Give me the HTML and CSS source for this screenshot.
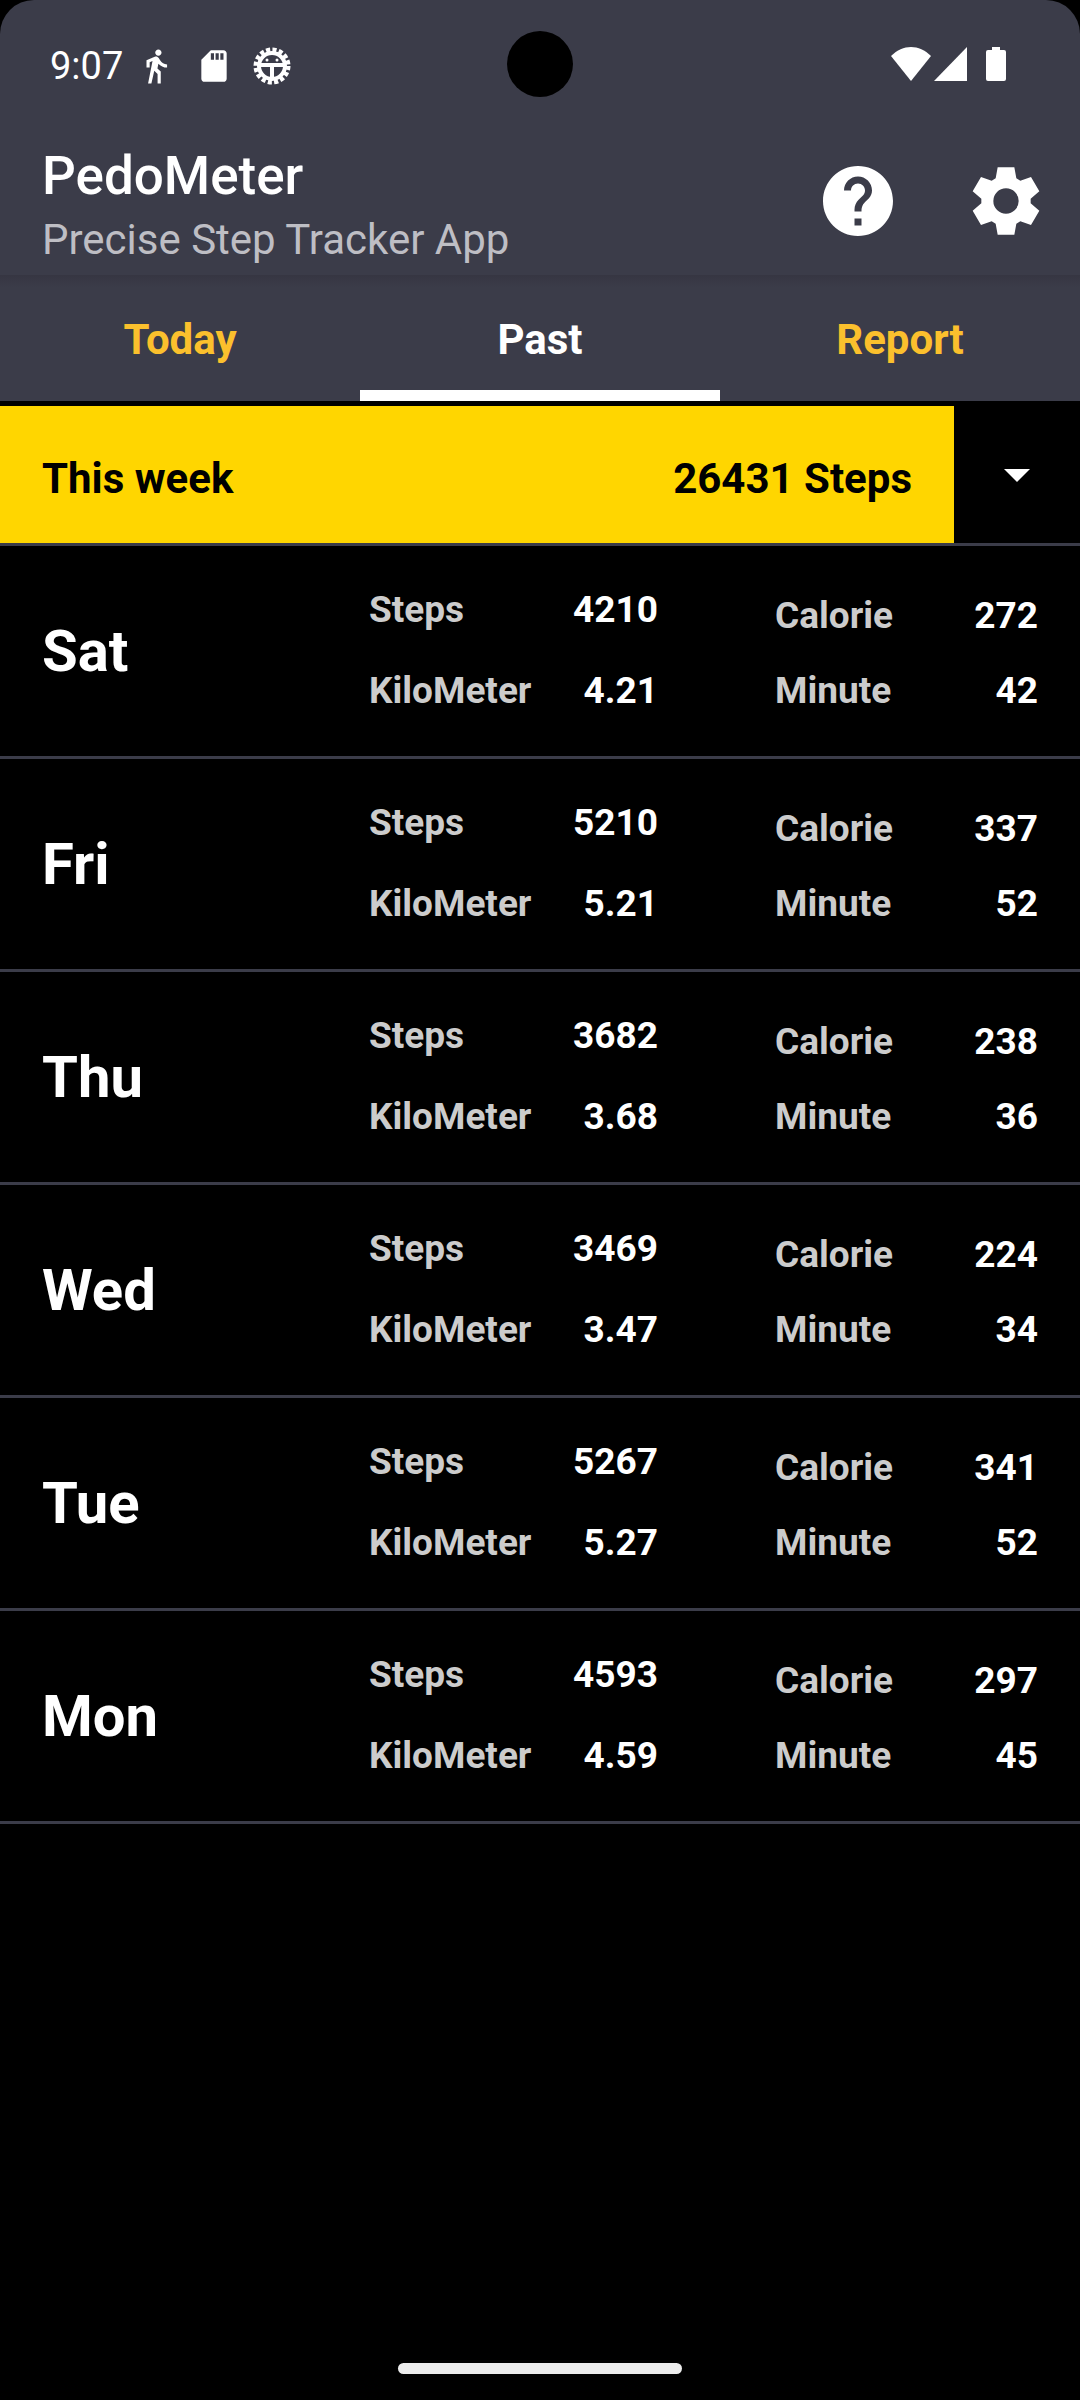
FILE: index.html
```html
<!DOCTYPE html>
<html lang="en">
<head>
    <meta charset="UTF-8">
    <meta name="viewport" content="width=device-width, initial-scale=1.0">
    <title>PedoMeter</title>
    <link rel="stylesheet" href="styles.css">
</head>
<body>
    <!-- Status bar, app bar and tabs -->
    <header class="top">
        <div class="status">
            <div class="status-left">
                <span class="clock">9:07</span>
                <div class="notifications">
                    <svg class="status-icon" viewBox="0 0 24 24"><path d="M13.500 5.500c1.100 0 2-.9 2-2s-.9-2-2-2-2 .9-2 2 .9 2 2 2zM9.800 8.900L7 23h2.100l1.800-8 2.100 2v6h2v-7.500l-2.100-2 .6-3C14.800 12 16.800 13 19 13v-2c-1.900 0-3.500-1-4.300-2.400l-1-1.600c-.4-.6-1-1-1.700-1-.3 0-.5.100-.8.100L6 8.300V13h2V9.600l1.800-.7"/></svg>
                    <svg class="status-icon" viewBox="0 0 24 24"><path d="M18 2h-8L4 8v12c0 1.100.9 2 2 2h12c1.100 0 2-.9 2-2V4c0-1.100-.9-2-2-2zm-6 6h-2V4h2v4zm3 0h-2V4h2v4zm3 0h-2V4h2v4z"/></svg>
                    <svg class="status-icon" viewBox="1 1 38 38">
                        <circle class="gear-teeth" cx="20" cy="20" r="16"/>
                        <circle class="gear-ring" cx="20" cy="20" r="13"/>
                        <path class="gear-ring" d="M8 19h24M20 19v13"/>
                        <circle cx="15" cy="14" r="1.500"/>
                        <circle cx="25" cy="14" r="1.500"/>
                    </svg>
                </div>
            </div>
            <span class="camera"></span>
            <div class="status-right">
                <svg class="wifi" viewBox="0 0 40 34"><path d="M20 34L0 9C6 3 13 0 20 0s14 3 20 9z"/></svg>
                <svg class="signal" viewBox="0 0 33 34"><path d="M33 0v34H0z"/></svg>
                <svg class="battery" viewBox="0 0 20 34"><path d="M6 0h8v3h4q2 0 2 2v27q0 2-2 2H2q-2 0-2-2V5q0-2 2-2h4z"/></svg>
            </div>
        </div>

        <div class="app-bar">
            <div class="titles">
                <h1>PedoMeter</h1>
                <p>Precise Step Tracker App</p>
            </div>
            <button class="icon-button" type="button" aria-label="Help">
                <svg viewBox="0 0 24 24"><path d="M12 2C6.480 2 2 6.480 2 12s4.480 10 10 10 10-4.480 10-10S17.520 2 12 2zm1 17h-2v-2h2v2zm2.070-7.750l-.9.920C13.450 12.900 13 13.500 13 15h-2v-.5c0-1.100.450-2.100 1.170-2.830l1.240-1.260c.370-.360.590-.860.590-1.410 0-1.100-.9-2-2-2s-2 .9-2 2H8c0-2.210 1.790-4 4-4s4 1.790 4 4c0 .880-.360 1.680-.930 2.250z"/></svg>
            </button>
            <button class="icon-button" type="button" aria-label="Settings">
                <svg viewBox="-126 -126 252 252"><path fill-rule="evenodd" d="M-31-68L-25-101H25L31-68 43-61 75-72 100-29 74-7V7L100 29 75 72 43 61 31 68 25 101H-25L-31 68-43 61-75 72-100 29-74 7V-7L-100-29-75-72-43-61zM0-38a38 38 0 1 0 0 76 38 38 0 1 0 0-76z"/></svg>
            </button>
        </div>

        <nav class="tabs">
            <a href="#today">Today</a>
            <a href="#past" class="active" aria-current="page">Past</a>
            <a href="#report">Report</a>
        </nav>
    </header>

    <main>
        <!-- Week total -->
        <section class="week">
            <div class="week-total">
                <h2>This week</h2>
                <span>26431 Steps</span>
            </div>
            <button class="week-toggle" type="button" aria-label="Choose week">
                <svg viewBox="0 0 26 13"><path d="M0 0h26L13 13z"/></svg>
            </button>
        </section>

        <!-- One row for each day -->
        <ul class="days">
            <li>
                <h3>Sat</h3>
                <dl class="distance"><dt>Steps</dt><dd>4210</dd><dt>KiloMeter</dt><dd>4.21</dd></dl>
                <dl class="energy"><dt>Calorie</dt><dd>272</dd><dt>Minute</dt><dd>42</dd></dl>
            </li>
            <li>
                <h3>Fri</h3>
                <dl class="distance"><dt>Steps</dt><dd>5210</dd><dt>KiloMeter</dt><dd>5.21</dd></dl>
                <dl class="energy"><dt>Calorie</dt><dd>337</dd><dt>Minute</dt><dd>52</dd></dl>
            </li>
            <li>
                <h3>Thu</h3>
                <dl class="distance"><dt>Steps</dt><dd>3682</dd><dt>KiloMeter</dt><dd>3.68</dd></dl>
                <dl class="energy"><dt>Calorie</dt><dd>238</dd><dt>Minute</dt><dd>36</dd></dl>
            </li>
            <li>
                <h3>Wed</h3>
                <dl class="distance"><dt>Steps</dt><dd>3469</dd><dt>KiloMeter</dt><dd>3.47</dd></dl>
                <dl class="energy"><dt>Calorie</dt><dd>224</dd><dt>Minute</dt><dd>34</dd></dl>
            </li>
            <li>
                <h3>Tue</h3>
                <dl class="distance"><dt>Steps</dt><dd>5267</dd><dt>KiloMeter</dt><dd>5.27</dd></dl>
                <dl class="energy"><dt>Calorie</dt><dd>341</dd><dt>Minute</dt><dd>52</dd></dl>
            </li>
            <li>
                <h3>Mon</h3>
                <dl class="distance"><dt>Steps</dt><dd>4593</dd><dt>KiloMeter</dt><dd>4.59</dd></dl>
                <dl class="energy"><dt>Calorie</dt><dd>297</dd><dt>Minute</dt><dd>45</dd></dl>
            </li>
        </ul>
    </main>

    <footer class="home-bar"><span></span></footer>
</body>
</html>
```
FILE: styles.css
```css
* {
    box-sizing: border-box;
}

body {
    display: flex;
    flex-direction: column;
    min-height: 100vh;
    margin: 0;
    background-color: #000;
    color: #fff;
    font-family: Roboto, sans-serif;
}

h1, h2, h3, p, ul, dl, dd {
    margin: 0;
    padding: 0;
}

button {
    padding: 0;
    border: none;
    background: none;
    cursor: pointer;
}

svg {
    display: block;
    fill: #fff;
}

.top {
    background-color: #3b3c49;
    border-radius: 34px 34px 0 0;
}

/* Status bar */
.status {
    position: relative;
    display: flex;
    justify-content: space-between;
    align-items: center;
    height: 128px;
    padding: 0 74px 0 50px;
}

.status-left {
    display: flex;
    align-items: center;
    gap: 14px;
    padding-top: 3px;
}

.notifications {
    display: flex;
    gap: 20px;
}

.status-right {
    display: flex;
    align-items: center;
}

.clock {
    font-size: 38px;
    line-height: 44px;
}

.status-icon {
    width: 38px;
    height: 38px;
}

.gear-teeth {
    fill: none;
    stroke: #fff;
    stroke-width: 5;
    stroke-dasharray: 4 2.280;
}

.gear-ring {
    fill: none;
    stroke: #fff;
    stroke-width: 4;
}

/* Camera cut-out */
.camera {
    position: absolute;
    top: 31px;
    left: 50%;
    width: 66px;
    height: 66px;
    border-radius: 50%;
    background-color: #000;
    transform: translateX(-50%);
}

.wifi {
    width: 40px;
    height: 34px;
}

.signal {
    width: 33px;
    height: 34px;
    margin: 0 19px 0 3px;
}

.battery {
    width: 20px;
    height: 34px;
}

/* App bar */
.app-bar {
    display: flex;
    align-items: center;
    gap: 64px;
    height: 147px;
    padding: 0 32px 0 42px;
}

.titles {
    flex: 1;
    padding-top: 12px;
}

.titles h1 {
    font-size: 53px;
    font-weight: 500;
    line-height: 64px;
}

.titles p {
    color: #bebec4;
    font-size: 42px;
    line-height: 64px;
}

.icon-button {
    padding-bottom: 2px;
}

.icon-button svg {
    width: 84px;
    height: 84px;
}

/* Tabs */
.tabs {
    display: flex;
    background-image: linear-gradient(#363642, #3b3c49 12px);
}

.tabs a {
    flex: 1;
    height: 126px;
    border-bottom: 11px solid transparent;
    color: #fbc02d;
    font-size: 42px;
    font-weight: 700;
    line-height: 130px;
    text-align: center;
    text-decoration: none;
}

.tabs .active {
    border-bottom-color: #fff;
    color: #fff;
}

/* Week total */
.week {
    display: flex;
    margin-top: 5px;
    border-bottom: 3px solid #3b3c49;
}

.week-total {
    display: flex;
    flex: 1;
    justify-content: space-between;
    align-items: center;
    height: 137px;
    padding: 8px 42px 0;
    background-color: #ffd600;
    color: #000;
    font-size: 42px;
    font-weight: 700;
    line-height: 50px;
}

.week-total h2 {
    font-size: 42px;
}

.week-toggle {
    width: 126px;
    padding-top: 2px;
}

.week-toggle svg {
    width: 26px;
    height: 13px;
    margin: 0 auto;
}

/* Days */
.days {
    list-style: none;
}

.days li {
    display: grid;
    grid-template-columns: 327fr 289fr 117fr 263fr;
    align-items: center;
    height: 213px;
    padding: 0 42px;
    border-bottom: 3px solid #3b3c49;
}

.days h3 {
    font-size: 58px;
    font-weight: 700;
    line-height: 68px;
}

.days dl {
    display: grid;
    grid-template-columns: auto auto;
    justify-content: space-between;
    font-size: 37px;
    font-weight: 700;
    line-height: 45px;
}

.days .distance {
    row-gap: 36px;
    padding-bottom: 2px;
}

.days .energy {
    grid-column: 4;
    row-gap: 30px;
    padding-top: 4px;
}

.days dt {
    color: #ccc;
}

.days dd {
    text-align: right;
}

/* Home bar */
.home-bar {
    margin-top: auto;
    padding-bottom: 26px;
}

.home-bar span {
    display: block;
    width: 284px;
    height: 11px;
    margin: 0 auto;
    border-radius: 6px;
    background-color: #ececec;
}
```
